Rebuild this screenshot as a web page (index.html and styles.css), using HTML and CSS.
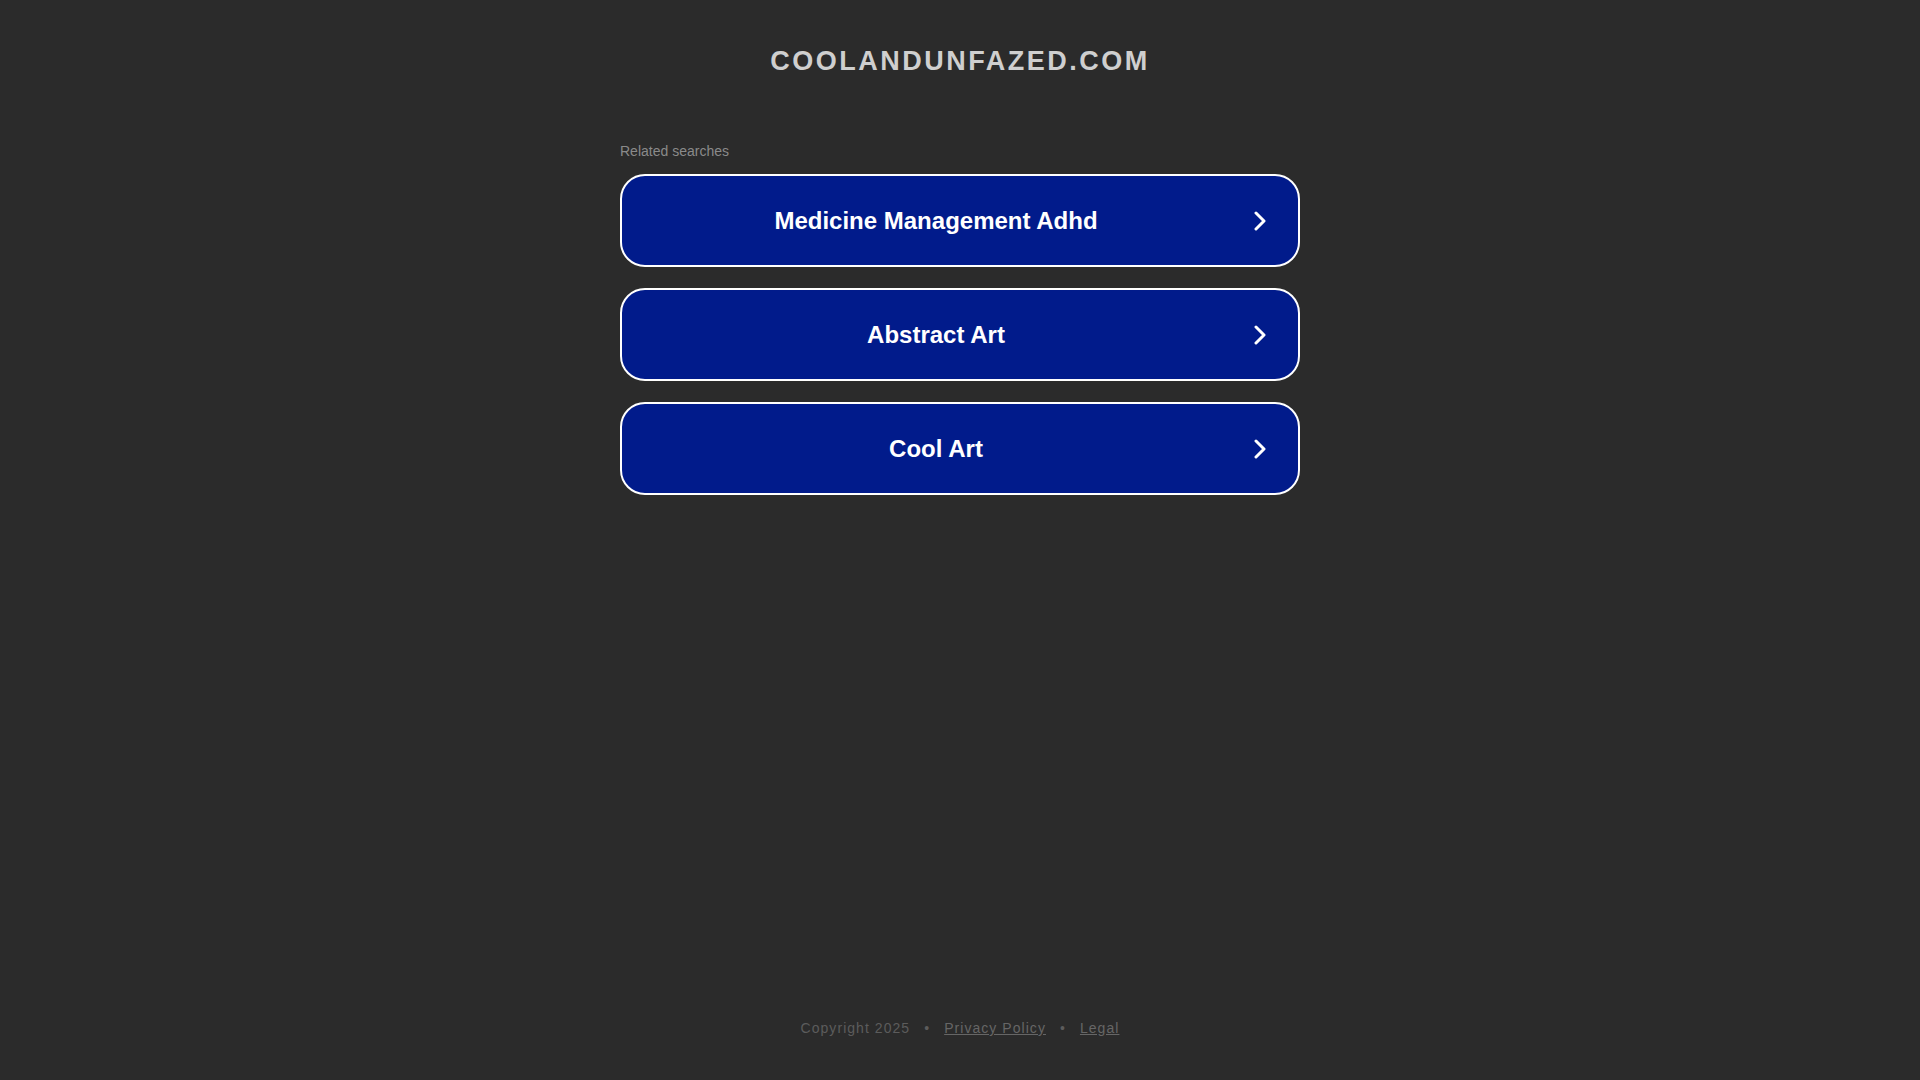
FILE: index.html
```html
<!DOCTYPE html>
<html lang="en">
<head>
<meta charset="utf-8">
<title>coolandunfazed.com</title>
<link rel="stylesheet" href="styles.css">
</head>
<body>
<div class="page">
  <header class="header">
    <h1 class="domain">COOLANDUNFAZED.COM</h1>
  </header>
  <main class="main">
    <div class="related">
      <p class="related-title">Related searches</p>
      <a class="card" href="#">
        <span class="card-text">Medicine Management Adhd</span>
        <svg class="chev" viewBox="0 0 12 20" width="12" height="20"><path d="M2 2 L10 10 L2 18" fill="none" stroke="#fff" stroke-width="3" stroke-linecap="round" stroke-linejoin="round"/></svg>
      </a>
      <a class="card" href="#">
        <span class="card-text">Abstract Art</span>
        <svg class="chev" viewBox="0 0 12 20" width="12" height="20"><path d="M2 2 L10 10 L2 18" fill="none" stroke="#fff" stroke-width="3" stroke-linecap="round" stroke-linejoin="round"/></svg>
      </a>
      <a class="card" href="#">
        <span class="card-text">Cool Art</span>
        <svg class="chev" viewBox="0 0 12 20" width="12" height="20"><path d="M2 2 L10 10 L2 18" fill="none" stroke="#fff" stroke-width="3" stroke-linecap="round" stroke-linejoin="round"/></svg>
      </a>
    </div>
  </main>
  <footer class="footer">
    <span>Copyright 2025</span>
    <span class="sep">•</span>
    <a href="#">Privacy Policy</a>
    <span class="sep">•</span>
    <a href="#">Legal</a>
  </footer>
</div>
</body>
</html>
```

FILE: styles.css
```css
html, body {
  margin: 0;
  padding: 0;
  background: #2b2b2b;
  font-family: "Liberation Sans", Arial, sans-serif;
}

.page {
  min-height: 100vh;
  display: flex;
  flex-direction: column;
  align-items: center;
}

.header {
  padding-top: 45px;
}

.domain {
  margin: 0;
  font-size: 27px;
  line-height: 32px;
  font-weight: bold;
  letter-spacing: 2.5px;
  color: #cfcfcf;
  text-align: center;
}

.main {
  margin-top: 64px;
}

.related {
  width: 680px;
  display: flex;
  flex-direction: column;
  gap: 21px;
}

.related-title {
  margin: 0 0 -8px 0;
  font-size: 14px;
  line-height: 20px;
  color: #8a8a8a;
}

.card {
  box-sizing: border-box;
  height: 93px;
  display: flex;
  align-items: center;
  padding: 0 32px 0 30px;
  background: #011b8b;
  border: 2px solid #ffffff;
  border-radius: 25px;
  text-decoration: none;
}

.card-text {
  flex: 1;
  text-align: center;
  font-size: 24px;
  font-weight: bold;
  color: #ffffff;
}

.chev {
  flex: none;
  margin-left: 34px;
}

.footer {
  margin-top: auto;
  padding-bottom: 42px;
  display: flex;
  gap: 14px;
  font-size: 14px;
  line-height: 20px;
  letter-spacing: 1.05px;
  color: #5c5c5c;
}

.footer a {
  color: #666666;
  text-decoration: underline;
}

.sep {
  color: #5c5c5c;
}
```
